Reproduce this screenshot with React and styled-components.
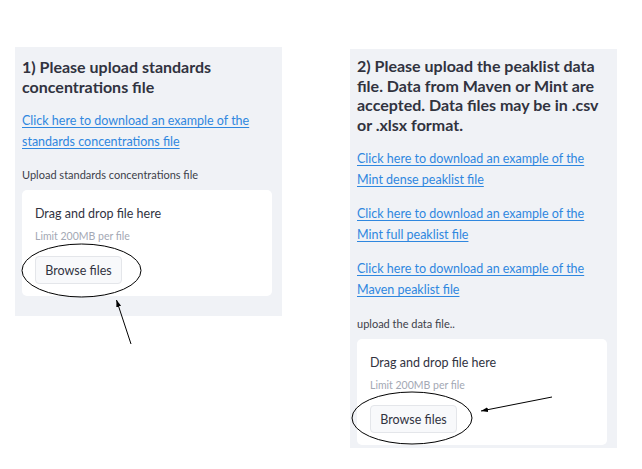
import React from "react";
import styled, { createGlobalStyle } from "styled-components";

const Global = createGlobalStyle`
  html, body { margin: 0; padding: 0; background: #ffffff; }
  body { font-family: "Lato", "Noto Sans", sans-serif; color: #31333f; }
`;

const Page = styled.div`
  position: relative;
  width: 642px;
  height: 469px;
  display: flex;
  align-items: flex-start;
  padding-left: 15px;
  gap: 68px;
  box-sizing: border-box;
`;

const Panel = styled.section`
  width: 267px;
  margin-top: ${(p) => p.$top}px;
  padding: ${(p) => p.$padTop}px 10px ${(p) => p.$padBottom}px 7px;
  box-sizing: border-box;
  background: #f0f2f6;
  display: flex;
  flex-direction: column;
`;

const Heading = styled.h2`
  margin: 0;
  font-size: 16px;
  font-weight: 700;
  line-height: ${(p) => p.$lh}px;
  color: #31333f;
`;

const LinkBlock = styled.a`
  display: block;
  margin-top: ${(p) => p.$gap}px;
  font-size: 12.5px;
  line-height: 21px;
  color: #2f87df;
  text-decoration: underline;
  text-underline-offset: 2px;
`;

const Label = styled.div`
  margin-top: ${(p) => p.$gap}px;
  font-size: 11px;
  line-height: 16px;
  color: #3d3f4a;
`;

const Dropzone = styled.div`
  margin-top: 7px;
  background: #ffffff;
  border-radius: 5px;
  padding: 15px 13px 12px;
  display: flex;
  flex-direction: column;
  align-items: flex-start;
`;

const DropTitle = styled.div`
  font-size: 12.5px;
  line-height: 18px;
  color: #31333f;
`;

const DropLimit = styled.div`
  margin-top: 5px;
  font-size: 10.5px;
  line-height: 16px;
  color: #a3a8b4;
`;

const BrowseButton = styled.button`
  margin-top: 12px;
  height: 28px;
  width: 87px;
  padding: 0;
  font-family: inherit;
  font-size: 12.5px;
  color: #31333f;
  background: #f8f9fb;
  border: 1px solid #e4e6ea;
  border-radius: 4px;
`;

const Annotations = styled.svg`
  position: absolute;
  left: 0;
  top: 0;
  pointer-events: none;
`;

function Uploader({ label, labelGap }) {
  return (
    <>
      <Label $gap={labelGap}>{label}</Label>
      <Dropzone>
        <DropTitle>Drag and drop file here</DropTitle>
        <DropLimit>Limit 200MB per file</DropLimit>
        <BrowseButton>Browse files</BrowseButton>
      </Dropzone>
    </>
  );
}

export default function App() {
  return (
    <>
      <Global />
      <Page>
        <Panel $top={47} $padTop={10} $padBottom={20}>
          <Heading $lh={20}>1) Please upload standards concentrations file</Heading>
          <LinkBlock href="#" $gap={13}>
            Click here to download an example of the standards concentrations file
          </LinkBlock>
          <Uploader label="Upload standards concentrations file" labelGap={15} />
        </Panel>
        <Panel $top={49} $padTop={7} $padBottom={3}>
          <Heading $lh={19.5}>
            2) Please upload the peaklist data file. Data from Maven or Mint are accepted. Data files
            may be in .csv or .xlsx format.
          </Heading>
          <LinkBlock href="#" $gap={14}>
            Click here to download an example of the Mint dense peaklist file
          </LinkBlock>
          <LinkBlock href="#" $gap={13}>
            Click here to download an example of the Mint full peaklist file
          </LinkBlock>
          <LinkBlock href="#" $gap={13}>
            Click here to download an example of the Maven peaklist file
          </LinkBlock>
          <Uploader label="upload the data file.." labelGap={16} />
        </Panel>
        <Annotations width="642" height="469" viewBox="0 0 642 469">
          <defs>
            <marker id="ah" markerWidth="8" markerHeight="8" refX="7" refY="4" orient="auto" markerUnits="userSpaceOnUse">
              <path d="M0,1.5 L7,4 L0,6.5 Z" fill="#000" />
            </marker>
          </defs>
          <ellipse cx="81.5" cy="270.5" rx="59.5" ry="26.5" fill="none" stroke="#000" strokeWidth="1" />
          <ellipse cx="412" cy="418" rx="60" ry="26" fill="none" stroke="#000" strokeWidth="1" />
          <line x1="131" y1="344" x2="116.5" y2="300" stroke="#000" strokeWidth="1" markerEnd="url(#ah)" />
          <line x1="552" y1="397" x2="481" y2="411" stroke="#000" strokeWidth="1" markerEnd="url(#ah)" />
        </Annotations>
      </Page>
    </>
  );
}
